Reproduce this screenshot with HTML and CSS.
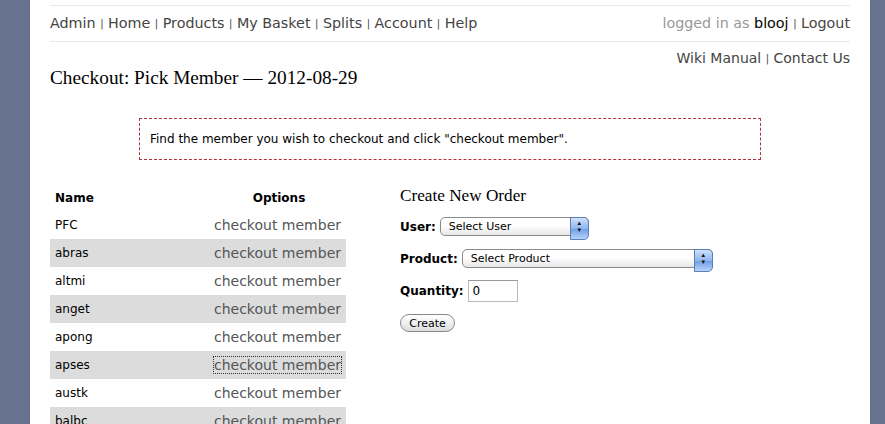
FILE: index.html
```html
<!DOCTYPE html>
<html lang="en">
  <head>
    <meta charset="UTF-8" />
    <title>Checkout: Pick Member</title>
    <link rel="stylesheet" href="styles.css">
  </head>
  <body>
    <div id="page">
      <div id="topbar">
        <div class="nav">
          <a href="#">Admin</a> <span class="sep">|</span>
          <a href="#">Home</a> <span class="sep">|</span>
          <a href="#">Products</a> <span class="sep">|</span>
          <a href="#">My Basket</a> <span class="sep">|</span>
          <a href="#">Splits</a> <span class="sep">|</span>
          <a href="#">Account</a> <span class="sep">|</span>
          <a href="#">Help</a>
        </div>
        <div class="user">
          <span class="muted">logged in as</span> <b>blooj</b> <span class="sep">|</span>
          <a href="#">Logout</a>
        </div>
      </div>
      <div id="subbar">
        <a href="#">Wiki Manual</a> <span class="sep">|</span> <a href="#">Contact Us</a>
      </div>

      <h1 id="title">Checkout: Pick Member &mdash; 2012-08-29</h1>

      <div class="notice">Find the member you wish to checkout and click "checkout member".</div>

      <div id="columns">
        <table class="members">
          <tr>
            <th class="name-head">Name</th>
            <th class="opt-head">Options</th>
          </tr>
          <tr><td>PFC</td><td class="opt"><a href="#">checkout member</a></td></tr>
          <tr><td>abras</td><td class="opt"><a href="#">checkout member</a></td></tr>
          <tr><td>altmi</td><td class="opt"><a href="#">checkout member</a></td></tr>
          <tr><td>anget</td><td class="opt"><a href="#">checkout member</a></td></tr>
          <tr><td>apong</td><td class="opt"><a href="#">checkout member</a></td></tr>
          <tr><td>apses</td><td class="opt"><a href="#" class="focused">checkout member</a></td></tr>
          <tr><td>austk</td><td class="opt"><a href="#">checkout member</a></td></tr>
          <tr><td>balbc</td><td class="opt"><a href="#">checkout member</a></td></tr>
        </table>

        <form class="new-order">
          <h2>Create New Order</h2>
          <p class="user-row">
            <label>User:</label>
            <span class="select-wrap user-select">
              <select><option>Select User</option></select>
            </span>
          </p>
          <p>
            <label>Product:</label>
            <span class="select-wrap product-select">
              <select><option>Select Product</option></select>
            </span>
          </p>
          <p>
            <label>Quantity:</label>
            <input type="text" value="0" class="qty">
          </p>
          <p>
            <button type="button">Create</button>
          </p>
        </form>
      </div>
    </div>
  </body>
</html>
```

FILE: styles.css
```css
* {
  box-sizing: border-box;
}

body {
  margin: 0;
  background-color: #66728e;
  font-family: "DejaVu Sans", Verdana, sans-serif;
  font-size: 12px;
  color: #000;
}

a {
  color: #444;
  text-decoration: none;
}

#page {
  margin: 0 15px 0 30px;
  background-color: #fff;
  padding: 5px 20px 0 20px;
  min-height: 100vh;
}

#topbar {
  display: flex;
  justify-content: space-between;
  align-items: center;
  height: 37px;
  padding-bottom: 2px;
  border-top: 1px solid #e8e8e8;
  border-bottom: 1px solid #e8e8e8;
  font-size: 14.3px;
  color: #444;
}

#topbar a,
#subbar a {
  color: #444;
}

.sep {
  font-size: 10px;
  color: #444;
  position: relative;
  top: -1px;
}

.muted {
  color: #999;
}

.user b {
  font-weight: normal;
  color: #000;
}

#subbar {
  text-align: right;
  font-size: 14px;
  padding-top: 7px;
  line-height: 18px;
}

#title {
  font-family: "Liberation Serif", Georgia, serif;
  font-weight: normal;
  font-size: 19.3px;
  margin: -2px 0 0 0;
  line-height: 22px;
}

.notice {
  width: 622px;
  margin: 29px auto 0 auto;
  border: 1px dashed #b2303f;
  padding: 12px 10px 12px 10px;
  height: 42px;
  line-height: 16px;
}

#columns {
  display: flex;
  align-items: flex-start;
  margin-top: 25px;
}

.members {
  width: 296px;
  border-collapse: collapse;
  table-layout: fixed;
}

.members th {
  font-weight: bold;
  height: 26px;
  padding: 0 5px;
}

.members th.name-head {
  text-align: left;
  width: 162px;
}

.members th.opt-head {
  text-align: center;
  width: 134px;
}

.members td {
  height: 28px;
  padding: 0 5px;
  white-space: nowrap;
}

.members tr:nth-child(odd) td {
  background-color: #dcdcdc;
}

.members td.opt {
  text-align: right;
  direction: rtl;
}

.members td.opt a {
  font-size: 14px;
  color: #555;
  direction: ltr;
  unicode-bidi: isolate;
}

.members a.focused {
  outline: 1px dotted #333;
}

.new-order {
  margin-left: 54px;
  font-size: 12px;
}

.new-order h2 {
  font-family: "Liberation Serif", Georgia, serif;
  font-weight: normal;
  font-size: 17.2px;
  margin: 0 0 10px 0;
  line-height: 22px;
}

.new-order p {
  margin: 0 0 12px 0;
  display: flex;
  align-items: center;
}

.new-order p.user-row {
  margin-bottom: 13px;
}

.new-order label {
  font-weight: bold;
  margin-right: 4px;
}

.select-wrap {
  position: relative;
  display: inline-block;
}

.select-wrap select {
  appearance: none;
  -webkit-appearance: none;
  font-family: "DejaVu Sans", sans-serif;
  font-size: 11px;
  height: 19px;
  padding: 0 0 0 8px;
  border: 1px solid #8a8a8a;
  border-radius: 5px;
  background: linear-gradient(#fff, #fff 45%, #e6e6e6);
  color: #000;
}

.user-select select {
  width: 149px;
}

.product-select select {
  width: 251px;
}

.select-wrap::after {
  content: "\25B4\A\25BE";
  white-space: pre;
  position: absolute;
  top: 0;
  right: 0;
  width: 17px;
  height: 19px;
  border: 1px solid #5a7fb8;
  border-radius: 0 5px 5px 0;
  background: linear-gradient(#cfe1fb, #8fb6ee 50%, #6e9de4 51%, #b7d3fa);
  font-size: 7px;
  line-height: 7px;
  padding-top: 2px;
  text-align: center;
  color: #111;
  pointer-events: none;
}

.qty {
  width: 50px;
  height: 22px;
  border: 1px solid #bbb;
  border-top-color: #999;
  font-family: "DejaVu Sans", sans-serif;
  font-size: 12px;
  padding: 0 4px;
}

.new-order button {
  font-family: "DejaVu Sans", sans-serif;
  font-size: 11px;
  height: 18px;
  width: 55px;
  padding: 0;
  border: 1px solid #888;
  border-radius: 9px;
  background: linear-gradient(#fff, #f2f2f2 45%, #dcdcdc);
  color: #000;
}
```
